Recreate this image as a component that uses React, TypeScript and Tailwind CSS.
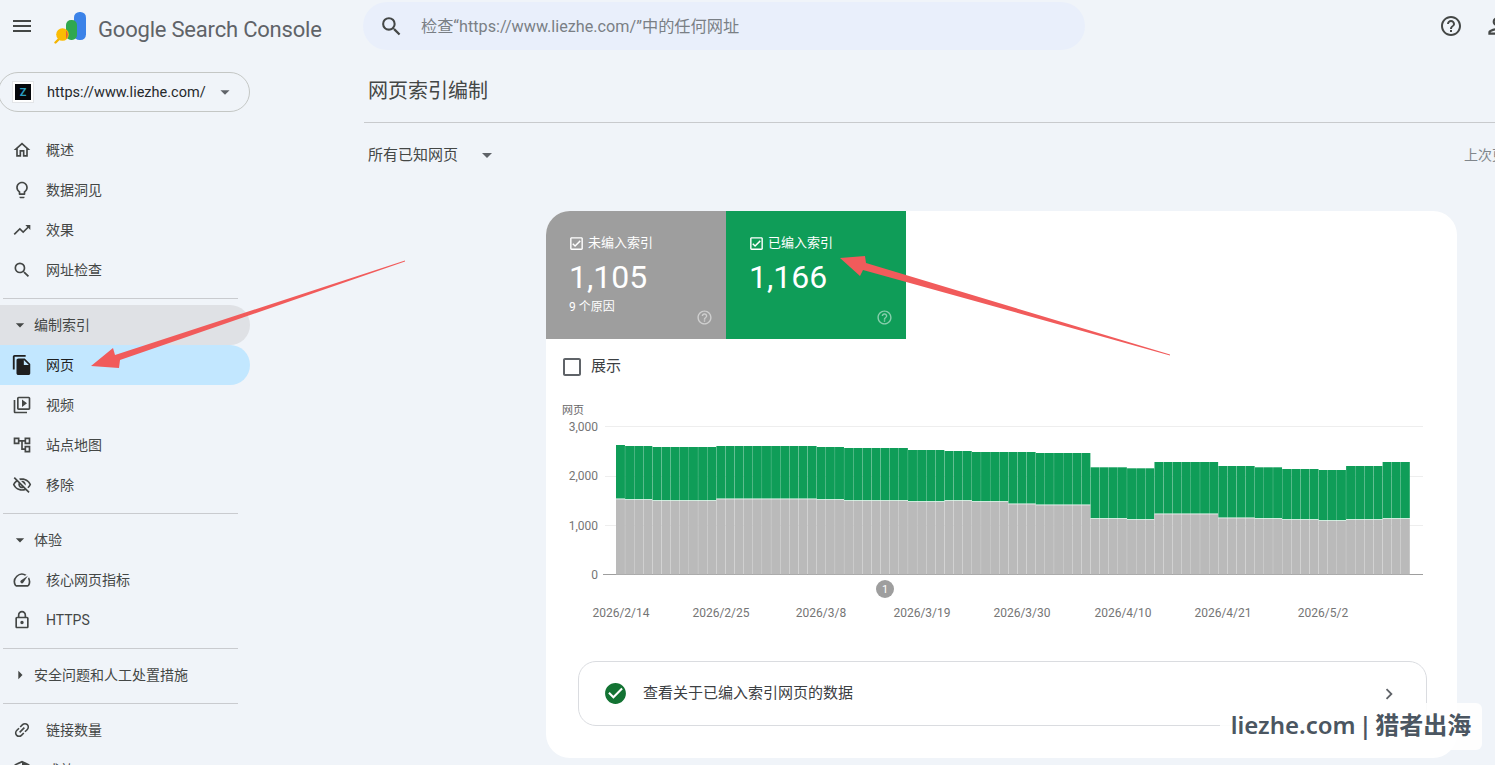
import type { ReactNode } from 'react';
import {
  MdMenu,
  MdSearch,
  MdHelpOutline,
  MdOutlinePerson,
  MdArrowDropDown,
  MdArrowRight,
  MdOutlineHome,
  MdOutlineLightbulb,
  MdTrendingUp,
  MdFileCopy,
  MdOutlineVideoLibrary,
  MdOutlineAccountTree,
  MdOutlineVisibilityOff,
  MdOutlineSpeed,
  MdOutlineHttps,
  MdLink,
  MdOutlineCheckBox,
  MdCheckBoxOutlineBlank,
  MdCheckCircle,
  MdChevronRight,
  MdOutlineSecurity,
} from 'react-icons/md';

// [bars, y of green top, y of gray top], read off the reference
const segments: [number, number, number][] = [
  [1, 445, 499.3],
  [3, 446, 500],
  [7, 447, 501],
  [11, 446, 499.3],
  [3, 447, 500],
  [7, 448, 501],
  [4, 450, 502],
  [3, 451, 501],
  [4, 452, 502],
  [3, 452, 504.3],
  [6, 453, 505.3],
  [4, 467.3, 519],
  [3, 468.3, 520],
  [7, 462, 514.3],
  [4, 466, 518.3],
  [3, 467.3, 519],
  [4, 469, 520],
  [3, 470, 521],
  [4, 466, 520],
  [3, 462, 519],
];

const bars = segments.flatMap(([count, top, mid]) => Array.from({ length: count }, () => ({ top, mid })));

const yTicks = [
  { label: '3,000', y: 426, textY: 430.6 },
  { label: '2,000', y: 476, textY: 480 },
  { label: '1,000', y: 525, textY: 529.6 },
];

const xTicks = [
  { label: '2026/2/14', x: 621 },
  { label: '2026/2/25', x: 721 },
  { label: '2026/3/8', x: 821 },
  { label: '2026/3/19', x: 922 },
  { label: '2026/3/30', x: 1022 },
  { label: '2026/4/10', x: 1123 },
  { label: '2026/4/21', x: 1223 },
  { label: '2026/5/2', x: 1323 },
];

function NavItem({ icon, label, active }: { icon: ReactNode; label: string; active?: boolean }) {
  return (
    <div className={`flex h-10 items-center rounded-r-full pl-[12px] ${active ? 'bg-[#c2e7ff] text-[#1f1f1f]' : 'text-[#444746]'}`}>
      <span className="flex w-[34px] shrink-0 items-center text-[20px]">{icon}</span>
      <span className="text-[14px]">{label}</span>
    </div>
  );
}

function SectionHead({ label, open, active }: { label: string; open?: boolean; active?: boolean }) {
  return (
    <div className={`flex h-10 items-center rounded-r-full pl-[10px] text-[#444746] ${active ? 'bg-[#dfe1e5]' : ''}`}>
      <span className="flex w-[24px] shrink-0 items-center text-[20px]">
        {open ? <MdArrowDropDown /> : <MdArrowRight />}
      </span>
      <span className="text-[14px]">{label}</span>
    </div>
  );
}

function Divider() {
  return <div className="mb-[6px] mt-2 ml-[3px] h-px w-[235px] bg-[#c9cbcf]" />;
}

function Sidebar() {
  return (
    <aside className="w-[250px] shrink-0">
      <div className="-ml-[2px] mt-[20px] flex h-10 w-[252px] items-center rounded-full border border-[#c4c7c5] pl-[13px]">
        <span className="flex h-[22px] w-[22px] items-center justify-center border border-[#e3e5e8] bg-white">
          <span className="flex h-4 w-4 items-center justify-center bg-[#06080c] text-[11px] font-bold leading-none text-[#2a9dc0]">Z</span>
        </span>
        <span className="ml-[13px] mt-px whitespace-nowrap text-[14.5px] text-[#26292c]">https://www.liezhe.com/</span>
        <MdArrowDropDown className="ml-[8px] text-[22px] text-[#5f6368]" />
      </div>

      <div className="mt-[18px]">
        <NavItem icon={<MdOutlineHome />} label="概述" />
        <NavItem icon={<MdOutlineLightbulb />} label="数据洞见" />
        <NavItem icon={<MdTrendingUp />} label="效果" />
        <NavItem icon={<MdSearch />} label="网址检查" />
      </div>
      <Divider />
      <SectionHead label="编制索引" open active />
      <NavItem icon={<MdFileCopy className="-ml-px text-[22px]" />} label="网页" active />
      <NavItem icon={<MdOutlineVideoLibrary />} label="视频" />
      <NavItem icon={<MdOutlineAccountTree />} label="站点地图" />
      <NavItem icon={<MdOutlineVisibilityOff />} label="移除" />
      <Divider />
      <SectionHead label="体验" open />
      <NavItem icon={<MdOutlineSpeed />} label="核心网页指标" />
      <NavItem icon={<MdOutlineHttps />} label="HTTPS" />
      <Divider />
      <SectionHead label="安全问题和人工处置措施" />
      <Divider />
      <NavItem icon={<MdLink className="-rotate-45" />} label="链接数量" />
      <NavItem icon={<MdOutlineSecurity />} label="成效" />
    </aside>
  );
}

function Logo() {
  return (
    <svg viewBox="0 0 32 32" className="h-8 w-8 shrink-0">
      <rect x="20" y="0" width="12" height="28" rx="5.5" fill="#3b82e8" />
      <rect x="12" y="8" width="11" height="20" rx="5" fill="#2fa84f" />
      <path d="M7 25 L1.5 30.5" stroke="#f4b400" strokeWidth="2.4" strokeLinecap="round" />
      <circle cx="8.5" cy="22.5" r="6.3" fill="#fbbc04" />
      <path d="M12 18.2 A6.3 6.3 0 0 1 12 27 Z" fill="#e8603c" />
    </svg>
  );
}

function Header() {
  return (
    <header className="flex h-[52px] items-center">
      <div className="flex w-[363px] shrink-0 items-center">
        <MdMenu className="ml-[10px] text-[24px] text-[#444746]" />
        <span className="ml-[20px] mt-[4px]"><Logo /></span>
        <span className="ml-[12px] mt-[6px] whitespace-nowrap text-[22px] tracking-[-0.2px] text-[#5f6368]">Google Search Console</span>
      </div>
      <div className="flex h-12 w-[722px] shrink-0 items-center rounded-full bg-[#e9effb] pl-[16px]">
        <MdSearch className="text-[25px] text-[#444746]" />
        <span className="ml-[17px] mt-[3px] text-[16.2px] text-[#7a7f85]">检查“https://www.liezhe.com/”中的任何网址</span>
      </div>
      <MdHelpOutline className="ml-[354px] shrink-0 text-[24px] text-[#444746]" />
      <MdOutlinePerson className="ml-[21px] shrink-0 text-[26px] text-[#444746]" />
    </header>
  );
}

function Tile({ title, value, note, color }: { title: string; value: string; note?: string; color: string }) {
  return (
    <div className={`relative h-[128px] w-[180px] px-[23px] pt-[23px] text-white ${color}`}>
      <div className="flex items-center text-[13px] leading-[18px]">
        <MdOutlineCheckBox className="-ml-[1px] mr-[3px] text-[17px]" />
        {title}
      </div>
      <div className="mt-[6px] text-[32px] leading-[38px]">{value}</div>
      {note && <div className="mt-[2px] text-[12px] leading-[18px]">{note}</div>}
      <MdHelpOutline className="absolute bottom-[13px] right-[13px] text-[17px] text-white/50" />
    </div>
  );
}

function Chart() {
  const barWidth = 794 / 87;
  return (
    <svg viewBox="546 394 911 240" className="block h-[240px] w-[911px]">
      <text x="562" y="414" fontSize="11" fill="#666">网页</text>
      {yTicks.map((t) => (
        <g key={t.label}>
          <line x1="605" x2="1423" y1={t.y + 0.5} y2={t.y + 0.5} stroke="#eeeeee" />
          <text x="598" y={t.textY} fontSize="12" textAnchor="end" fill="#757575">{t.label}</text>
        </g>
      ))}
      <line x1="603" x2="1423" y1="574.5" y2="574.5" stroke="#9e9e9e" />
      <text x="598" y="579" fontSize="12" textAnchor="end" fill="#757575">0</text>
      {bars.map((b, i) => (
        <g key={i}>
          <rect x={616 + i * barWidth} y={b.top} width={barWidth - 0.2} height={b.mid - b.top - 0.8} fill="#0f9d58" />
          <rect x={616 + i * barWidth} y={b.mid} width={barWidth - 0.2} height={574.5 - b.mid} fill="#bababa" />
        </g>
      ))}
      <circle cx="885" cy="589" r="9" fill="#9e9e9e" />
      <text x="885" y="593" fontSize="11" textAnchor="middle" fill="#fff">1</text>
      {xTicks.map((t) => (
        <text key={t.label} x={t.x} y="617" fontSize="12" textAnchor="middle" fill="#757575">{t.label}</text>
      ))}
    </svg>
  );
}

function Arrows() {
  return (
    <svg viewBox="0 0 1495 765" className="pointer-events-none absolute inset-0 h-[765px] w-[1495px]">
      <polygon points="405,260.6 405,261.4 120,360 119,368 91,366 113,348 115,355" fill="#f15b5b" />
      <polygon points="1170,354.6 1170,355.4 863,270 860,276 840,258 865,256 866,263" fill="#f15b5b" />
    </svg>
  );
}

export default function App() {
  return (
    <div className="relative h-[765px] w-[1495px] overflow-hidden bg-[#f0f4f9] font-['Roboto','Noto_Sans_CJK_SC',sans-serif]">
      <Header />
      <div className="flex">
        <Sidebar />
        <main className="min-w-0 flex-1 pl-[114px]">
          <div className="flex h-[71px] items-center border-b border-[#c8cacd] pl-1 pt-2 text-[20px] text-[#444746]">网页索引编制</div>
          <div className="flex h-[64px] items-center whitespace-nowrap">
            <div className="flex w-[1100px] shrink-0 items-center pl-1 text-[15px] text-[#444746]">
              所有已知网页
              <MdArrowDropDown className="ml-[17px] text-[24px] text-[#5f6368]" />
            </div>
            <span className="text-[14px] text-[#80868b]">上次更新时间</span>
          </div>
          <section className="ml-[182px] mt-[24px] h-[547px] w-[911px] overflow-hidden rounded-[24px] bg-white">
            <div className="flex">
              <Tile title="未编入索引" value="1,105" note="9 个原因" color="bg-[#9e9e9e]" />
              <Tile title="已编入索引" value="1,166" color="bg-[#0f9d58]" />
            </div>
            <div className="flex h-[55px] items-center pl-[14px] text-[15px] text-[#3c4043]">
              <MdCheckBoxOutlineBlank className="text-[24px] text-[#5f6368]" />
              <span className="ml-[7px]">展示</span>
            </div>
            <Chart />
            <div className="ml-[32px] mt-[27px] flex h-[65px] w-[849px] items-center rounded-[18px] border border-[#dadce0] pl-[24px] pr-[26px]">
              <MdCheckCircle className="text-[25px] text-[#137333]" />
              <span className="ml-[15px] text-[15px] text-[#3c4043]">查看关于已编入索引网页的数据</span>
              <MdChevronRight className="ml-auto text-[22px] text-[#5f6368]" />
            </div>
          </section>
        </main>
      </div>
      <Arrows />
      <div className="absolute left-[1220px] top-[703px] flex h-[47px] w-[262px] items-center justify-center rounded-[6px] bg-white/90 pb-[3px] text-[24px] font-semibold text-[#4b5661] [word-spacing:-3px] font-['Noto_Sans','Noto_Sans_CJK_SC',sans-serif]">
        liezhe.com | 猎者出海
      </div>
    </div>
  );
}
